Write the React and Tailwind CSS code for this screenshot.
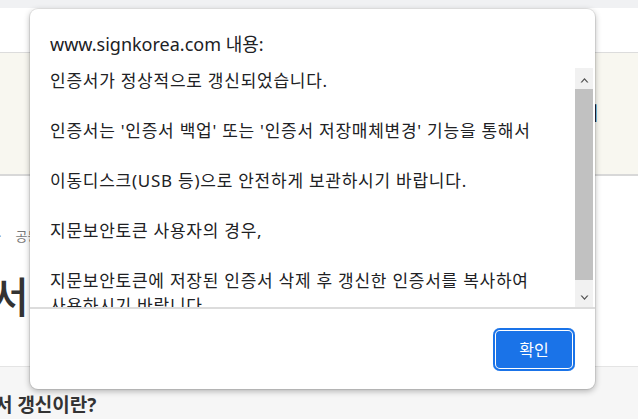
import React from 'react'

const font = { fontFamily: '"Noto Sans", "Noto Sans CJK KR", sans-serif' }

const lines = [
  '인증서가 정상적으로 갱신되었습니다.',
  '',
  "인증서는 '인증서 백업' 또는 '인증서 저장매체변경' 기능을 통해서",
  '',
  '이동디스크(USB 등)으로 안전하게 보관하시기 바랍니다.',
  '',
  '지문보안토큰 사용자의 경우,',
  '',
  '지문보안토큰에 저장된 인증서 삭제 후 갱신한 인증서를 복사하여 사용하시기 바랍니다.',
]

function Arrow({ up }) {
  return (
    <svg width="9" height="6" viewBox="0 0 9 6">
      <path
        d={up ? 'M0.5 5.5 L4.5 1 L8.5 5.5 L7 5.5 L4.5 2.8 L2 5.5 Z' : 'M0.5 0.5 L4.5 5 L8.5 0.5 L7 0.5 L4.5 3.2 L2 0.5 Z'}
        fill="#505050"
      />
    </svg>
  )
}

function Page() {
  return (
    <div className="flex h-[419px] flex-col overflow-hidden bg-white" style={font}>
      <div className="h-[8px] bg-[#f0f1f3]" />
      <div className="h-[45px] border-b border-[#dcdcdc] bg-white" />
      <div className="flex h-[124px] items-center justify-end border-b-2 border-[#d8d8d8] bg-[#f8f7f0] pr-[40px]">
        <span className="text-[18px] font-bold text-[#222]">인증서</span>
      </div>
      <div className="flex h-[190px] flex-col bg-white">
        <div className="mt-[50px] flex items-center text-[13px] leading-[20px] text-[#777]">
          <span className="-ml-[2px]">·</span>
          <span className="ml-[14px] whitespace-nowrap">공동인증서</span>
        </div>
        <div className="-ml-[87px] mt-[26px] whitespace-nowrap text-[42px] font-medium leading-[50px] text-[#333]">인증서 갱신</div>
      </div>
      <div className="flex-1 border-t border-[#e4e4e4] bg-[#f6f6f6] pt-[24px]">
        <div className="-ml-[40px] whitespace-nowrap text-[19px] font-bold text-[#333]">인증서 갱신이란?</div>
      </div>
    </div>
  )
}

function Dialog() {
  return (
    <div
      className="absolute left-[30px] top-[9px] flex h-[380px] w-[565px] flex-col rounded-[8px] bg-white shadow-[0_0_0_1px_rgba(0,0,0,0.08),0_2px_6px_rgba(0,0,0,0.3)]"
      style={font}
    >
      <div className="pl-[20px] pt-[23px] text-[18px] leading-[24px] text-[#202124]">www.signkorea.com 내용:</div>
      <div className="mt-[12px] flex h-[239px] pl-[20px] pr-[2px]">
        <div className="flex-1 overflow-hidden break-keep text-[17px] leading-[25px] tracking-[0.75px] text-[#202124]">
          {lines.map((l, i) => (
            <div key={i} className="min-h-[25px]">{l}</div>
          ))}
        </div>
        <div className="flex w-[18px] flex-col bg-[#f1f1f1]">
          <div className="flex h-[21px] items-center justify-center pt-[2px]">
            <Arrow up />
          </div>
          <div className="h-[191px] bg-[#c1c1c1]" />
          <div className="flex flex-1 items-end justify-center pb-[6px]">
            <Arrow />
          </div>
        </div>
      </div>
      <div className="flex flex-1 items-start justify-end border-t-2 border-[#dcdcdc] pr-[20px] pt-[19px]">
        <button className="flex h-[43px] w-[82px] items-center justify-center rounded-[7px] bg-[#1a73e8] text-[16px] text-white shadow-[inset_0_0_0_2px_#1a73e8,inset_0_0_0_3px_#ffffff]">
          확인
        </button>
      </div>
    </div>
  )
}

export default function App() {
  return (
    <div className="relative h-[419px] w-[638px] overflow-hidden">
      <Page />
      <Dialog />
    </div>
  )
}
